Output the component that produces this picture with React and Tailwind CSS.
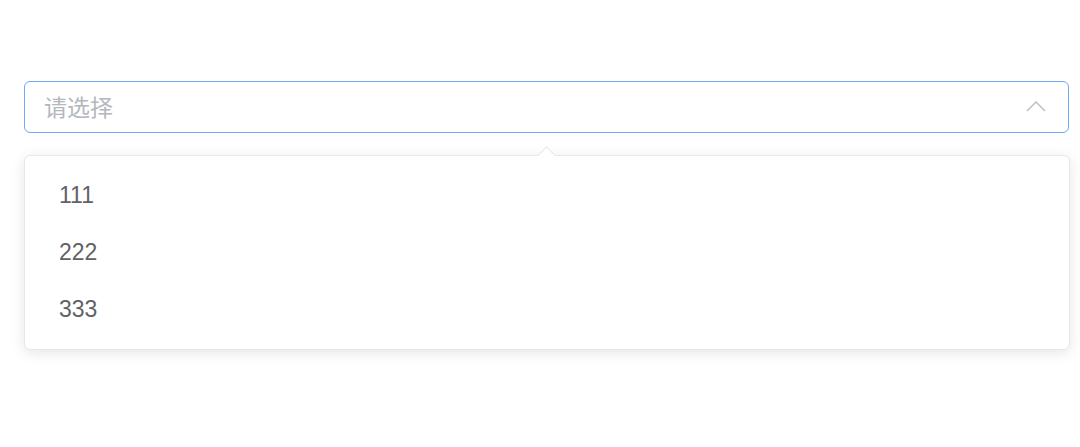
import React from 'react';

const options = ['111', '222', '333'];

const App = () => {
  return (
    <div className="min-h-screen bg-white pt-[81px] pl-[24px] pr-[10px]" style={{ fontFamily: '"Liberation Sans", "Noto Sans CJK SC", sans-serif' }}>
      <div className="relative w-[1045px]">
        {/* Select input */}
        <div className="flex h-[52px] items-center justify-between rounded-[6px] border-[1.5px] border-[#6fa8f7] bg-white pb-[2px] pl-[19px] pr-[22px]">
          <span className="text-[23px] leading-none text-[#b4b7bd]" style={{ fontFamily: '"Noto Sans CJK SC", sans-serif' }}>请选择</span>
          <svg width="20" height="12" viewBox="0 0 20 12" fill="none">
            <path d="M1 11 L10 2 L19 11" stroke="#b8bbc1" strokeWidth="1.4" />
          </svg>
        </div>

        {/* Dropdown popper */}
        <div className="absolute left-0 top-[74px] w-[1046px] rounded-[6px] border border-[#e4e7ed] bg-white py-[11px] shadow-[0_3px_14px_rgba(0,0,0,0.1)]">
          <div className="absolute left-[515px] top-[-7px] h-[13px] w-[13px] rotate-45 border-l border-t border-[#e4e7ed] bg-white" />
          {options.map((o) => (
            <div key={o} className="flex h-[57px] items-center pl-[34px] text-[23px] text-[#606266]">
              {o}
            </div>
          ))}
        </div>
      </div>
    </div>
  );
};

export default App;
